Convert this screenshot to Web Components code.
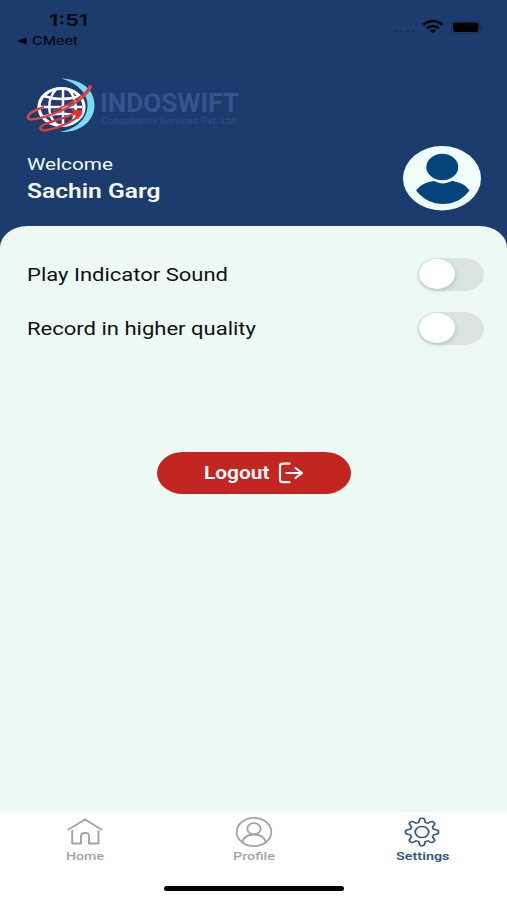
<!DOCTYPE html>
<html lang="en">
<head>
<meta charset="utf-8">
<title>Settings</title>
<style>
  html, body { margin: 0; }
  body {
    width: 507px;
    height: 900px;
    overflow: hidden;
    font-family: Roboto, "Liberation Sans", sans-serif;
    background: #1b3c6d;
  }
</style>
</head>
<body>
<settings-screen>
  <status-bar slot="status"></status-bar>
  <brand-logo slot="header"></brand-logo>
  <user-greeting slot="header" name="Sachin Garg"></user-greeting>
  <toggle-row><wide-text fit="201" style="font-size:18px">Play Indicator Sound</wide-text></toggle-row>
  <toggle-row><wide-text fit="229" style="font-size:18px">Record in higher quality</wide-text></toggle-row>
  <logout-button><wide-text fit="65.5" style="font-size:17.5px;font-weight:600">Logout</wide-text></logout-button>
  <tab-bar slot="tabs">
    <tab-item>
      <svg slot="icon" width="36" height="28" viewBox="0 0 36 28" fill="none" stroke="currentColor" stroke-width="1.9" stroke-linecap="round" stroke-linejoin="round">
        <path d="M1.500 11.500 18 1.500 34.500 11.500M5.200 13V25.500H14V18Q14 15 18 15T22 18V25.500H31.500V13"/>
      </svg>
      <wide-text fit="38">Home</wide-text>
    </tab-item>
    <tab-item>
      <svg slot="icon" width="38" height="32" viewBox="0 0 38 32" fill="none" stroke="currentColor" stroke-width="1.8">
        <ellipse cx="19" cy="16" rx="17.300" ry="14.200"/>
        <ellipse cx="19" cy="12.700" rx="6.700" ry="5.600"/>
        <path d="M7 26C8.500 21.500 13 18.500 19 18.500S29.500 21.500 31 26"/>
      </svg>
      <wide-text fit="42">Profile</wide-text>
    </tab-item>
    <tab-item active>
      <svg slot="icon" width="36" height="30" viewBox="-18 -15 36 30" fill="none" stroke="currentColor" stroke-linejoin="round">
        <g transform="scale(1.2 1)" stroke-width="1.5">
          <path id="gear"/>
          <circle r="5.600"/>
        </g>
      </svg>
      <wide-text fit="53.5">Settings</wide-text>
    </tab-item>
  </tab-bar>
</settings-screen>

<script>
function attach(el, html) {
  const shadow = el.attachShadow({ mode: "open" });
  const template = document.createElement("template");
  template.innerHTML = html;
  shadow.appendChild(template.content.cloneNode(true));
  return shadow;
}

// One line of text, stretched sideways until it is `fit` pixels wide
class WideText extends HTMLElement {
  constructor() {
    super();
    attach(this, `<style>
      :host { display: block; white-space: nowrap; line-height: 24px; text-align: left; }
      span { display: inline-block; transform-origin: 0 50%; }
    </style><span><slot></slot></span>`);
  }
  connectedCallback() {
    const span = this.shadowRoot.querySelector("span");
    const fit = Number(this.getAttribute("fit"));
    this.style.width = fit + "px";
    span.style.transform = `scaleX(${fit / span.getBoundingClientRect().width})`;
  }
}

class SettingsScreen extends HTMLElement {
  constructor() {
    super();
    attach(this, `<style>
      :host { display: flex; flex-direction: column; height: 900px; background: #1b3c6d; }
      header { display: flex; flex-direction: column; height: 225.5px; flex: none; }
      main {
        flex: 1;
        box-sizing: border-box;
        padding: 21.5px 23.5px 0 27px;
        background: #ecf9f5;
        border-radius: 27px 27px 0 0 / 22px 22px 0 0;
      }
    </style>
    <header><slot name="status"></slot><slot name="header"></slot></header>
    <main><slot></slot></main>
    <slot name="tabs"></slot>`);
  }
}

class StatusBar extends HTMLElement {
  constructor() {
    super();
    attach(this, `<style>
      :host {
        display: flex; justify-content: space-between; flex: none;
        height: 78px; box-sizing: border-box; padding: 8px 23px 0 17px;
        font-family: Inter, "Liberation Sans", sans-serif; color: #03070e;
      }
      .time { margin-left: 32px; font-size: 16.5px; font-weight: 600; }
      .back { display: flex; align-items: center; gap: 5px; height: 18px; }
      .back wide-text { font-size: 11.5px; font-weight: 500; line-height: 18px; }
      .right { margin-top: 9px; }
    </style>
    <div>
      <wide-text class="time" fit="39">1:51</wide-text>
      <div class="back">
        <svg width="10" height="8" viewBox="0 0 10 8"><path d="M0 4 9.500.5V7.500Z"/></svg>
        <wide-text fit="46">CMeet</wide-text>
      </div>
    </div>
    <svg class="right" width="91" height="20" viewBox="393 17 91 20">
      <g fill="#15305a"><rect x="394" y="30.500" width="3" height="2" rx="1"/><rect x="400" y="30.500" width="3" height="2" rx="1"/><rect x="406" y="30.500" width="3" height="2" rx="1"/><rect x="412" y="30.500" width="3" height="2" rx="1"/></g>
      <g fill="none" stroke="#020509" stroke-width="2.400">
        <path d="M423.500 24.800Q433 17.400 442.500 24.800M427 28.300Q433 23.800 439 28.300"/>
      </g>
      <path d="M429.300 30.500Q433 28.300 436.700 30.500L433 33Z" fill="#020509"/>
      <rect x="451.500" y="21" width="28.500" height="12.500" rx="3.500" fill="none" stroke="#16315b"/>
      <rect x="453" y="22.500" width="25.500" height="9.500" rx="2.300" fill="#000"/>
      <path d="M481.500 25Q484 27.200 481.500 29.500Z" fill="#10284c"/>
    </svg>`);
  }
}

class BrandLogo extends HTMLElement {
  constructor() {
    super();
    attach(this, `<style>
      :host { display: flex; height: 56px; padding-left: 26px; flex: none; }
      .words { margin-left: 5px; padding-top: 13px; color: #34558d; }
      .name { font-size: 25px; font-weight: 700; line-height: 25px; }
      .sub { margin-left: 1px; font-size: 9.5px; line-height: 10px; color: #2d4f84; }
    </style>
    <svg width="69" height="56" viewBox="26 78 69 56" fill="none">
      <ellipse cx="62" cy="107" rx="22" ry="18.500" fill="#283a73"/>
      <path d="M61 78.500C83 79 95 91 94.500 106C94 122 79 133 60 132C76 129 87 119 87.500 106C88 94 78 83 61 78.500Z" fill="#79dcf5"/>
      <g stroke="#fff" stroke-width="2.500">
        <ellipse cx="61.500" cy="107" rx="22.500" ry="18.500" stroke-width="3.200"/>
        <path d="M56 89.500C47 99 47 115 56 124M63 89V124M69 90C77 98 78 114 71 123M44 96Q61 102 80 96M39.500 107H82M43 117Q58 111 79 116"/>
      </g>
      <path d="M91 86C89 94 75 105 58 112C43 118 29 122 28 117.500C27.500 114 35 110 44 107" stroke="#dc4640" stroke-width="2.400"/>
      <path d="M90 87C83 96 69 105 53 111" stroke="#cf3941" stroke-width="1.600"/>
      <path d="M82 113C74 121 60 128 47 130C40 131 38 128 43 125C51 121 63 119 76 113" stroke="#df3a38" stroke-width="2.400"/>
      <path d="M71 109.500 83 110.500 78 119.500Z" fill="#ef2d2b"/>
      <circle cx="90" cy="87" r="2" fill="#df423e"/>
    </svg>
    <div class="words">
      <wide-text class="name" fit="139">INDOSWIFT</wide-text>
      <wide-text class="sub" fit="137">Consultancy Services Pvt. Ltd.</wide-text>
    </div>`);
  }
}

class UserGreeting extends HTMLElement {
  constructor() {
    super();
    attach(this, `<style>
      :host {
        display: flex; justify-content: space-between;
        padding: 12px 25.5px 0 27px; color: #f3f8ff;
      }
      .hello { margin-top: 6px; font-size: 17px; line-height: 24px; }
      .name { margin-top: 3px; font-size: 20px; font-weight: 600; }
    </style>
    <div>
      <wide-text class="hello" fit="86">Welcome</wide-text>
      <wide-text class="name" fit="133.5">${this.getAttribute("name")}</wide-text>
    </div>
    <svg width="79" height="65" viewBox="0 0 79 65">
      <ellipse cx="39" cy="32.200" rx="39" ry="32.200" fill="#f0fffc"/>
      <ellipse cx="39.300" cy="21" rx="16" ry="13.200" fill="#06447d"/>
      <path d="M28 35.500Q31 34.300 33.500 36Q40 38.800 46.500 36Q49 34.300 52 35.500Q62 37.500 66.500 44.500Q56 58 40 58T13 44.500Q18 37.500 28 35.500Z" fill="#06447d"/>
    </svg>`);
  }
}

class ToggleRow extends HTMLElement {
  constructor() {
    super();
    attach(this, `<style>
      :host {
        display: flex; align-items: center; justify-content: space-between;
        height: 54.3px; color: #0d1312;
      }
      ::slotted(wide-text) { padding-top: 2px; }
      .track {
        display: flex; align-items: center; box-sizing: border-box;
        width: 66.5px; height: 33px; padding-left: 2px;
        border-radius: 20px / 16.5px; background: #dae5e1;
      }
      .knob {
        width: 36px; height: 30px; border-radius: 50%;
        background: #fff; box-shadow: 1px 2px 4px rgba(0, 0, 0, .14);
      }
    </style>
    <slot></slot>
    <div class="track"><div class="knob"></div></div>`);
  }
}

class LogoutButton extends HTMLElement {
  constructor() {
    super();
    attach(this, `<style>
      :host { display: flex; padding: 96px 0 0 129.5px; }
      button {
        display: flex; align-items: center; gap: 9px; box-sizing: border-box;
        width: 194.5px; height: 42.5px; padding: 0 0 0 47px; border: 0;
        border-radius: 26px / 21px; background: #c32621; color: #fff;
        font: inherit;
      }
    </style>
    <button>
      <slot></slot>
      <svg width="26" height="22" viewBox="0 0 26 22" fill="none" stroke="#fff" stroke-width="2.200" stroke-linecap="round" stroke-linejoin="round">
        <path d="M11.500 1.700H5Q2 1.700 2 4V17.800Q2 20.200 5 20.200H11.500M8.500 11H23.500M17.500 6 24 11 17.500 16"/>
      </svg>
    </button>`);
  }
}

class TabBar extends HTMLElement {
  constructor() {
    super();
    attach(this, `<style>
      :host { display: block; height: 88px; flex: none; background: #fff; }
      nav { display: grid; grid-template-columns: repeat(3, 168.5px); height: 74px; padding-left: 1px; }
      .home { width: 180px; height: 5px; margin-left: 164px; border-radius: 3px; background: #000; }
    </style>
    <nav><slot></slot></nav>
    <div class="home"></div>`);
  }
}

class TabItem extends HTMLElement {
  constructor() {
    super();
    attach(this, `<style>
      :host {
        display: flex; flex-direction: column; align-items: center;
        padding-top: 4px; color: #a3a3a3; font-size: 10.5px; font-weight: 500;
      }
      :host([active]) { color: #365486; font-weight: 600; }
      .icon { display: flex; align-items: center; height: 32px; }
      ::slotted(wide-text) { line-height: 17px; }
    </style>
    <div class="icon"><slot name="icon"></slot></div>
    <slot></slot>`);
  }
}

// Eight rounded teeth around the settings wheel
function gearPath() {
  const points = [];
  for (let i = 0; i < 96; i++) {
    const angle = i * Math.PI / 48;
    const wave = Math.max(-1, Math.min(1, Math.cos(angle * 8) * 1.7));
    const radius = 11.8 + 1.9 * wave;
    points.push((radius * Math.sin(angle)).toFixed(2) + " " + (-radius * Math.cos(angle)).toFixed(2));
  }
  return "M" + points.join("L") + "Z";
}
document.getElementById("gear").setAttribute("d", gearPath());

customElements.define("settings-screen", SettingsScreen);
customElements.define("status-bar", StatusBar);
customElements.define("brand-logo", BrandLogo);
customElements.define("user-greeting", UserGreeting);
customElements.define("toggle-row", ToggleRow);
customElements.define("logout-button", LogoutButton);
customElements.define("tab-bar", TabBar);
customElements.define("tab-item", TabItem);
// last, so every line is already laid out when it measures itself
customElements.define("wide-text", WideText);
</script>
</body>
</html>
